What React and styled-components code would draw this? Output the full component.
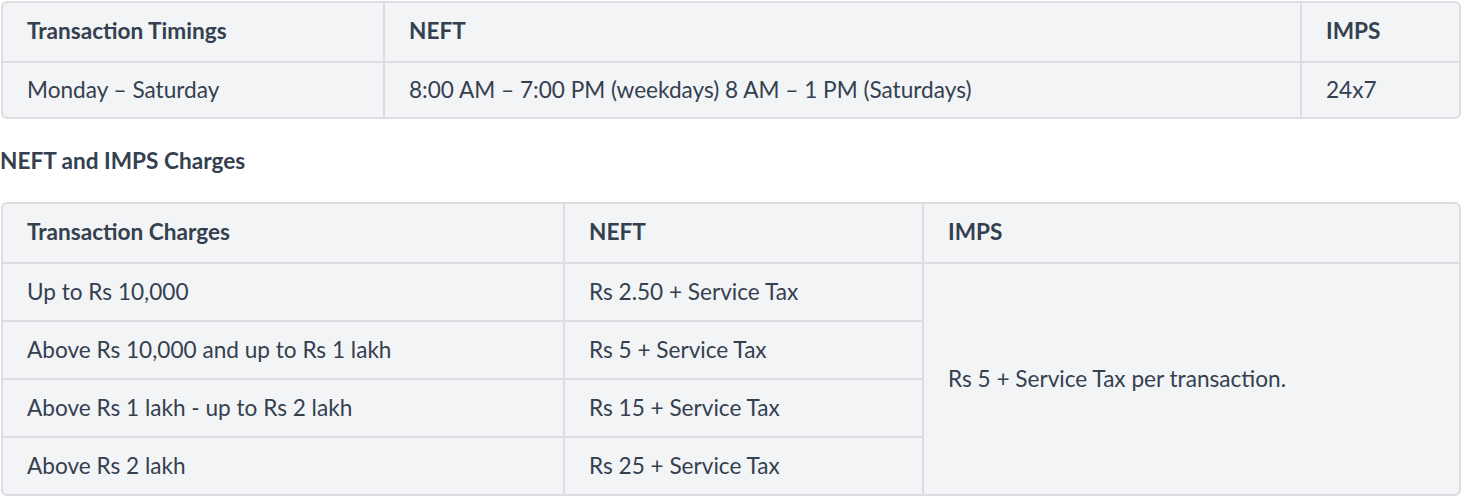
import React from "react";
import styled, { createGlobalStyle } from "styled-components";

const GlobalStyle = createGlobalStyle`
  body {
    margin: 0;
    background: #fff;
    font-family: Lato, "Open Sans", Arial, sans-serif;
    color: #34404f;
  }
`;

const Page = styled.div`
  width: 1465px;
  padding: 1px 4px 0 1px;
  box-sizing: border-box;
`;

const Frame = styled.div`
  border: 2px solid #dcdde0;
  border-radius: 6px;
  overflow: hidden;
  background: #f3f4f6;
`;

const Table = styled.table`
  width: 100%;
  border-collapse: collapse;
  table-layout: fixed;
  font-size: 22.6px;
  line-height: 26px;
`;

const Th = styled.th`
  box-sizing: border-box;
  text-align: left;
  font-weight: 700;
  padding: 15px 24px 17px;
  width: ${(p) => p.width || "auto"};
  border-bottom: 2px solid #dcdde0;
  & + & {
    border-left: 2px solid #dcdde0;
  }
`;

const Td = styled.td`
  box-sizing: border-box;
  padding: ${(p) => p.pad || "15px 24px"};
  font-weight: 400;
  vertical-align: middle;
  border-top: ${(p) => (p.first ? "none" : "2px solid #dcdde0")};
  border-left: ${(p) => (p.lead ? "none" : "2px solid #dcdde0")};
`;

const Heading = styled.h4`
  margin: 28px 0 27px -1px;
  font-size: 22.6px;
  line-height: 28px;
  font-weight: 700;
`;

const charges = [
  ["Up to Rs 10,000", "Rs 2.50 + Service Tax"],
  ["Above Rs 10,000 and up to Rs 1 lakh", "Rs 5 + Service Tax"],
  ["Above Rs 1 lakh - up to Rs 2 lakh", "Rs 15 + Service Tax"],
  ["Above Rs 2 lakh", "Rs 25 + Service Tax"],
];

export default function App() {
  return (
    <>
      <GlobalStyle />
      <Page>
        <Frame>
          <Table>
            <thead>
              <tr>
                <Th width="381px">Transaction Timings</Th>
                <Th width="917px">NEFT</Th>
                <Th>IMPS</Th>
              </tr>
            </thead>
            <tbody>
              <tr>
                <Td first lead pad="14px 24px">Monday – Saturday</Td>
                <Td first pad="14px 24px">8:00 AM – 7:00 PM (weekdays) 8 AM – 1 PM (Saturdays)</Td>
                <Td first pad="14px 24px">24x7</Td>
              </tr>
            </tbody>
          </Table>
        </Frame>
        <Heading>NEFT and IMPS Charges</Heading>
        <Frame>
          <Table>
            <thead>
              <tr>
                <Th width="561px">Transaction Charges</Th>
                <Th width="359px">NEFT</Th>
                <Th>IMPS</Th>
              </tr>
            </thead>
            <tbody>
              {charges.map(([range, neft], i) => (
                <tr key={i}>
                  <Td first={i === 0} lead>{range}</Td>
                  <Td first={i === 0}>{neft}</Td>
                  {i === 0 && (
                    <Td first rowSpan={4}>
                      Rs 5 + Service Tax per transaction.
                    </Td>
                  )}
                </tr>
              ))}
            </tbody>
          </Table>
        </Frame>
      </Page>
    </>
  );
}
